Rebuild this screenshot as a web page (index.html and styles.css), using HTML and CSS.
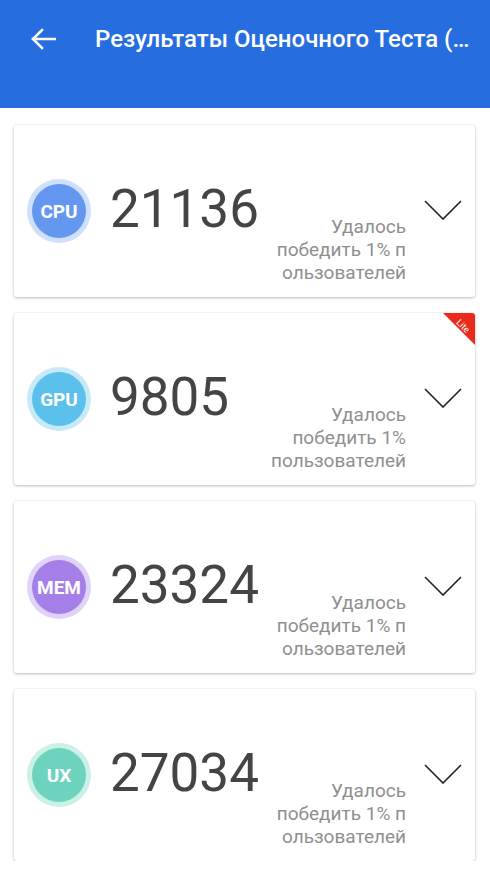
FILE: index.html
```html
<!DOCTYPE html>
<html lang="ru">
<head>
  <meta charset="UTF-8" />
  <meta name="viewport" content="width=device-width, initial-scale=1.0"/>
  <title>Результаты Оценочного Теста</title>
  <link rel="stylesheet" href="styles.css">
</head>
<body>
  <header class="appbar">
    <div class="toolbar">
      <svg class="back" width="26" height="22" viewBox="0 0 26 22">
        <path d="M25 11H3 M12 2L3 11l9 9" fill="none" stroke="#fff" stroke-width="2.6" stroke-linecap="square"/>
      </svg>
      <h1 class="title">Результаты Оценочного Теста (…</h1>
    </div>
  </header>

  <main class="list">
    <div class="card">
      <div class="badge cpu"><span>CPU</span></div>
      <div class="score">21136</div>
      <div class="note">Удалось<br>победить 1% п<br>ользователей</div>
      <svg class="chev" width="38" height="20" viewBox="0 0 38 20"><path d="M1 1l18 18L37 1" fill="none" stroke="#222" stroke-width="1.6"/></svg>
    </div>

    <div class="card">
      <div class="ribbon"><span>Lite</span></div>
      <div class="badge gpu"><span>GPU</span></div>
      <div class="score">9805</div>
      <div class="note">Удалось<br>победить 1%<br>пользователей</div>
      <svg class="chev" width="38" height="20" viewBox="0 0 38 20"><path d="M1 1l18 18L37 1" fill="none" stroke="#222" stroke-width="1.6"/></svg>
    </div>

    <div class="card">
      <div class="badge mem"><span>MEM</span></div>
      <div class="score">23324</div>
      <div class="note">Удалось<br>победить 1% п<br>ользователей</div>
      <svg class="chev" width="38" height="20" viewBox="0 0 38 20"><path d="M1 1l18 18L37 1" fill="none" stroke="#222" stroke-width="1.6"/></svg>
    </div>

    <div class="card">
      <div class="badge ux"><span>UX</span></div>
      <div class="score">27034</div>
      <div class="note">Удалось<br>победить 1% п<br>ользователей</div>
      <svg class="chev" width="38" height="20" viewBox="0 0 38 20"><path d="M1 1l18 18L37 1" fill="none" stroke="#222" stroke-width="1.6"/></svg>
    </div>
  </main>
</body>
</html>
```

FILE: styles.css
```css
body {
  margin: 0;
  background: #fff;
  font-family: Roboto, "Noto Sans", sans-serif;
  overflow: hidden;
}
.appbar {
  background: #266ddf;
  height: 108px;
}
.toolbar {
  height: 78px;
  display: flex;
  align-items: center;
  padding: 0 10px 0 30px;
}
.back {
  flex: none;
  margin-right: 39px;
}
.title {
  margin: 0;
  color: #fff;
  font-size: 24px;
  font-weight: 500;
  white-space: nowrap;
}
.list {
  display: flex;
  flex-direction: column;
  gap: 16px;
  padding: 17px 15px 0 14px;
}
.card {
  position: relative;
  box-sizing: border-box;
  height: 172px;
  display: flex;
  align-items: center;
  padding: 0 13px;
  border-radius: 3px;
  background: #fff;
  box-shadow: 0 1px 3px rgba(0,0,0,0.25), 0 0 1px rgba(0,0,0,0.12);
  overflow: hidden;
}
.badge {
  flex: none;
  width: 64px;
  height: 64px;
  border-radius: 50%;
  display: flex;
  align-items: center;
  justify-content: center;
}
.badge span {
  width: 54px;
  height: 54px;
  border-radius: 50%;
  display: flex;
  align-items: center;
  justify-content: center;
  color: #fff;
  font-weight: bold;
  font-size: 19px;
}
.cpu { background: #cfe0fb; }
.cpu span { background: #6497f0; }
.gpu { background: #c8eaf8; }
.gpu span { background: #5bc0eb; }
.mem { background: #e0d3f8; }
.mem span { background: #a57fe8; }
.ux { background: #cbf0e8; }
.ux span { background: #6dd3be; }
.score {
  flex: 1;
  margin-left: 19px;
  font-size: 53px;
  color: #444;
  line-height: 1;
  margin-top: -4px;
}
.note {
  align-self: flex-end;
  margin-bottom: 13px;
  text-align: right;
  color: #8f8f8f;
  font-size: 19px;
  line-height: 23px;
}
.chev {
  flex: none;
  margin-left: 18px;
  margin-top: -2px;
}
.ribbon {
  position: absolute;
  top: 0;
  right: 0;
  width: 32px;
  height: 32px;
  background: #ea2a1c;
  clip-path: polygon(0 0, 100% 0, 100% 100%);
}
.ribbon span {
  position: absolute;
  left: 5px;
  top: 8px;
  width: 30px;
  text-align: center;
  transform: rotate(45deg);
  color: #fff;
  font-size: 9px;
  line-height: 10px;
}
```
